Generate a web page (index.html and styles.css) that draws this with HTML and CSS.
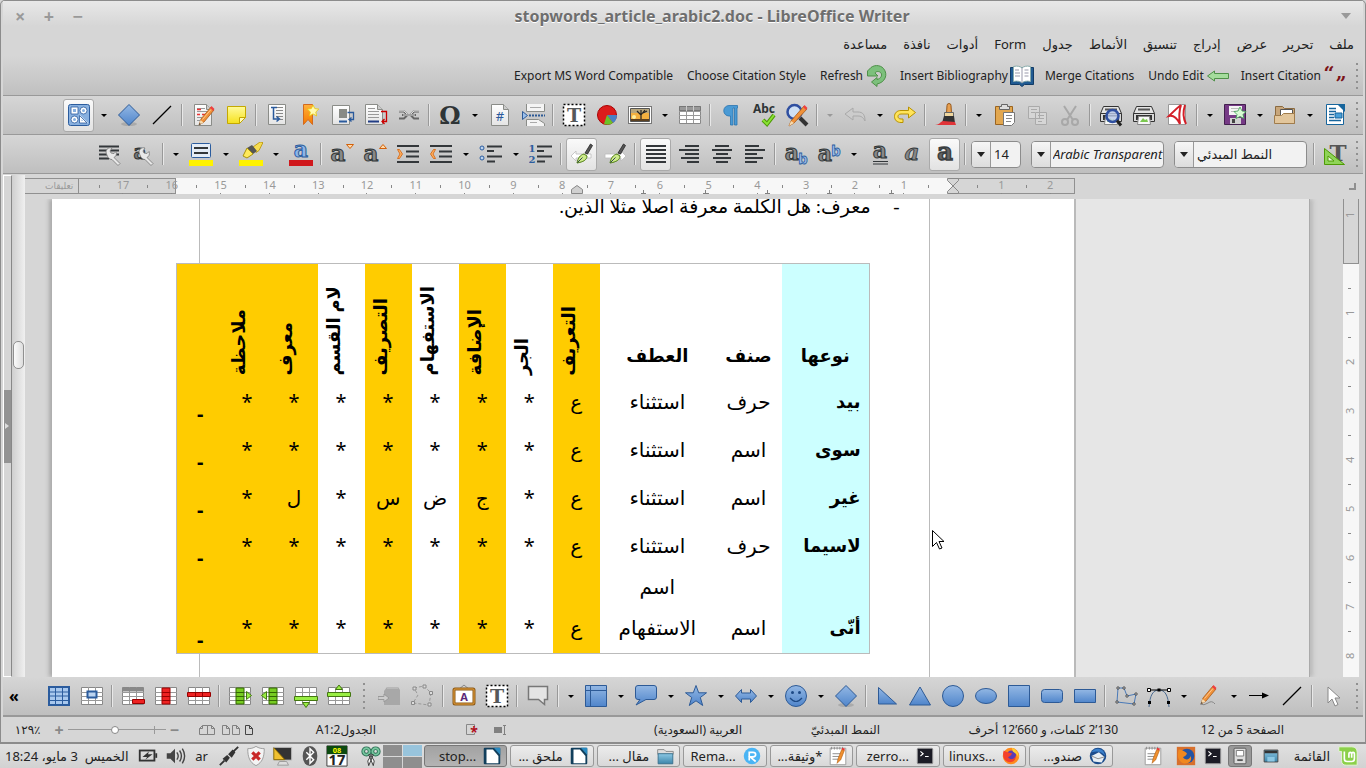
FILE: index.html
```html
<!DOCTYPE html>
<html lang="ar" dir="rtl">
<head>
<meta charset="utf-8">
<title>stopwords_article_arabic2.doc - LibreOffice Writer</title>
<link rel="stylesheet" href="styles.css">
</head>
<body>
<svg class="paints" aria-hidden="true">
<linearGradient id="blue" x1="0" y1="0" x2="0" y2="1"><stop offset="0" stop-color="#94b8e4"/><stop offset="1" stop-color="#4f85cb"/></linearGradient>
<linearGradient id="paper" x1="0" y1="0" x2="0" y2="1"><stop offset="0" stop-color="#fff"/><stop offset="1" stop-color="#e4e4e4"/></linearGradient>
<linearGradient id="yel" x1="0" y1="0" x2="0" y2="1"><stop offset="0" stop-color="#fffa9a"/><stop offset="1" stop-color="#f5e11c"/></linearGradient>
<linearGradient id="ora" x1="0" y1="0" x2="0" y2="1"><stop offset="0" stop-color="#ffb13b"/><stop offset="1" stop-color="#f57900"/></linearGradient>
<linearGradient id="sky" x1="0" y1="0" x2="0" y2="1"><stop offset="0" stop-color="#8cc8e4"/><stop offset="1" stop-color="#3d85aa"/></linearGradient>
</svg>
<svg class="sprite" aria-hidden="true">
<defs>
<g id="page"><path d="M3.500 1.500h12l5 5v16h-17z" fill="url(#paper)" stroke="#8a8c88"/><path d="M15.500 1.500v5h5" fill="#ccc" stroke="#8a8c88"/></g>
<g id="pencil"><path d="M8 22l2-6L20 4l3 3-10 12z" fill="#f0923a" stroke="#a85a1a" stroke-width=".8"/><path d="M19 5l3 3 1.500-2-3-3z" fill="#ef4040"/><path d="M8 22l1.500-5 3 2.500z" fill="#f6dcb0"/><path d="M8 22l.6-2 1.200 1z" fill="#222"/><path d="M11.500 16.500L20 6.500" stroke="#ffc890"/></g>
<g id="grid"><path d="M1.500 3.500h21v17h-21z" fill="#fff" stroke="#888"/><path d="M1 8.500h22M1 12.500h22M1 16.500h22M8.500 3v17M15.500 3v17" stroke="#999"/></g>
<g id="nib"><path d="M15 11L20.500 2l2 1.500L17.500 12z" fill="#555" stroke="#222" stroke-width=".8"/><path d="M7 21c1-5 3-8 7-9l3 2c0 4-4 6-10 7z" fill="#cdeb8a" stroke="#4e7d12"/><path d="M7.500 20.500l5-5" stroke="#345"/></g>
<g id="wrench"><path d="M8 10c0-3 3-5 6-4l-2 3 1 2 3 .5 2-2c1 3 0 5-2 6l6 6-2 2-6-6c-3 0-5-3-6-7.500z" fill="#e8e8e8" stroke="#777" stroke-width=".8"/></g>
</defs>
<symbol id="i-shapes" viewBox="0 0 24 24"><rect x="1.500" y="1.500" width="21" height="21" rx="2" fill="#88b0df" stroke="#2b5c9e"/><g fill="none" stroke="#fff" stroke-width="2"><path d="M5 5h5v5H5zM13.500 14v5h5z"/><circle cx="16.500" cy="7.500" r="2.500"/><circle cx="7.500" cy="16.500" r="2.500"/></g><g fill="none" stroke="#2b5c9e" stroke-width=".8"><path d="M4 4h7v7H4zM12.500 12.500v7.500H20z"/><circle cx="16.500" cy="7.500" r="3.500"/><circle cx="7.500" cy="16.500" r="3.500"/></g></symbol>
<symbol id="i-diamond" viewBox="0 0 24 24"><ellipse cx="12" cy="21" rx="8" ry="2" fill="#0002"/><path d="M12 1.500L22.500 12 12 22.500 1.500 12z" fill="url(#blue)" stroke="#2d5a96"/></symbol>
<symbol id="i-line" viewBox="0 0 24 24"><path d="M3 21L21 3" stroke="#000" stroke-width="1.200"/></symbol>
<symbol id="i-edit" viewBox="0 0 24 24"><use href="#page"/><path d="M6 5.500h8M6 8.500h11M6 14.500h5M6 17.500h5" stroke="#999"/><path d="M6 6.500h4M11 11.500h4M6 11.500h3" stroke="#e33" stroke-width="1.500"/><use href="#pencil"/></symbol>
<symbol id="i-note" viewBox="0 0 24 24"><path d="M3.500 3.500h18v11l-6 6h-12z" fill="url(#yel)" stroke="#c4a800"/><path d="M15.500 20.500v-6h6z" fill="#fffbb8" stroke="#c4a800"/></symbol>
<symbol id="i-index" viewBox="0 0 24 24"><path d="M3.500 1.500h17v20h-17z" fill="url(#paper)" stroke="#8a8c88"/><path d="M6 4.500h12M11 7.500h7M11 10.500h7M11 13.500h7M15 16.500h3" stroke="#888"/><path d="M6 4.500h6M8.500 5v11H14M11.500 13.500l3 2.500-3 2.500" fill="none" stroke="#2a5a9c" stroke-width="1.500"/></symbol>
<symbol id="i-bookmark" viewBox="0 0 24 24"><path d="M5.500 1.500h9v20l-4.500-5-4.500 5z" fill="url(#ora)" stroke="#d2691e"/><path d="M15 2l1.800 3.600 4 .5-3 2.800.8 4-3.600-2-3.500 2 .8-4-3-2.800 4-.5z" fill="#fff9b0" stroke="#e8c800" stroke-width=".8"/></symbol>
<symbol id="i-footnote" viewBox="0 0 24 24"><path d="M1.500 2.500h17v19h-17z" fill="url(#paper)" stroke="#8a8c88"/><path d="M8 6h8v9H8z" fill="#888a85"/><path d="M8 18.500h8" stroke="#2a5a9c" stroke-width="2"/><path d="M16.500 9.500h6v7h-4M20.500 14.500l-2.500 2 2.500 2" fill="none" stroke="#2a5a9c" stroke-width="1.300"/></symbol>
<symbol id="i-endnote" viewBox="0 0 24 24"><path d="M1.500 1.500h12l5 5v15h-17z" fill="url(#paper)" stroke="#8a8c88"/><path d="M13.500 1.500v5h5" fill="#ccc" stroke="#8a8c88"/><path d="M4 5.500h7M4 8.500h11M4 11.500h11M4 14.500h11" stroke="#999"/><path d="M4 18.500h11" stroke="#203c84" stroke-width="2"/><path d="M17 8.500h5.500v10h-4M20.500 16l-2.500 2.500 2.500 2.500" fill="none" stroke="#c00" stroke-width="1.300"/></symbol>
<symbol id="i-link" viewBox="0 0 24 24"><path d="M2 8.500h5l3 3M2 15.500h5l3-3M22 8.500h-5l-3 3M22 15.500h-5l-3-3M5 12h14" fill="none" stroke="#666" stroke-width="2"/><path d="M2 8h5l3 3M22 8h-5l-3 3M6 12h12" fill="none" stroke="#ddd"/></symbol>
<symbol id="i-omega" viewBox="0 0 24 24"><text x="12" y="21" class="gs" font-size="24" text-anchor="middle" fill="#2e3436">Ω</text></symbol>
<symbol id="i-field" viewBox="0 0 24 24"><use href="#page"/><text x="12" y="18" font-size="13" text-anchor="middle" fill="#2a5a9c">#</text></symbol>
<symbol id="i-pagebreak" viewBox="0 0 24 24"><path d="M5.500 1v7.500h18V1M5.500 23v-6.500h12l6 4V23" fill="#f4f4f4" stroke="#8a8c88"/><path d="M9 4.500h11M9 19.500h7" stroke="#aaa"/><path d="M1.500 8.500v8l5-4z" fill="#9cc0ec" stroke="#2d5a96"/><path d="M8 12.500h16" stroke="#2d5a96" stroke-width="2" stroke-dasharray="2 1"/></symbol>
<symbol id="i-textbox" viewBox="0 0 24 24"><rect x="1.500" y="1.500" width="21" height="21" fill="#fff" stroke="#000" stroke-width="1.500" stroke-dasharray="2 2"/><text x="12" y="19" class="gs" font-size="19" text-anchor="middle" fill="#55585a">T</text></symbol>
<symbol id="i-chart" viewBox="0 0 24 24"><circle cx="12" cy="12" r="9.500" fill="#dc1c1c" stroke="#a00"/><path d="M12 12h10a10 10 0 0 1-4 8z" fill="#4a80c4"/><path d="M12 12l6 8a10 10 0 0 1-9 1z" fill="#6cc228"/></symbol>
<symbol id="i-image" viewBox="0 0 24 24"><rect x=".5" y="3.500" width="23" height="17" fill="#fff" stroke="#777"/><path d="M2.500 5.500h19v13h-19z" fill="#f3b040" stroke="#555"/><path d="M3 6h18v4H3z" fill="#b9a77c"/><circle cx="6" cy="14" r="2" fill="#fff0a0"/><path d="M13 18v-6L9 8M13 12l4-5M13 11V7M15 10l4-2" stroke="#222" stroke-width="1.200" fill="none"/><path d="M3 16h18v2H3z" fill="#5a4020"/></symbol>
<symbol id="i-table" viewBox="0 0 24 24"><use href="#grid"/><path d="M1.500 3.500h21v4h-21z" fill="#999" stroke="#777"/><path d="M8.500 3v5M15.500 3v5" stroke="#ccc"/></symbol>
<symbol id="i-pilcrow" viewBox="0 0 24 24"><path d="M18.500 2.500H10a5 5 0 0 0 0 10.500h1.500v9h2.500v-17h1.500v17H18v-17h.5z" fill="#4a9ad4" stroke="#2a74b0" stroke-width=".8"/></symbol>
<symbol id="i-spell" viewBox="0 0 24 24"><text x="12" y="10" class="gb" font-size="12" text-anchor="middle" fill="#2e3436">Abc</text><path d="M11 17l4 4 7-9" fill="none" stroke="#4e9a06" stroke-width="4"/><path d="M11 17l4 4 7-9" fill="none" stroke="#8ae234" stroke-width="2"/></symbol>
<symbol id="i-find" viewBox="0 0 24 24"><circle cx="9.500" cy="9" r="7" fill="#cfe0f4" stroke="#2f4fa0" stroke-width="2.500"/><path d="M15 15l7 7" stroke="#333" stroke-width="4"/><path d="M4 23l2-5L19 3l3 3L9 20z" fill="#f0923a" stroke="#a85a1a" stroke-width=".8"/><path d="M18 4l3 3 1.500-2-3-3z" fill="#ef4040"/><path d="M4 23l2-5 3 2z" fill="#f6dcb0"/></symbol>
<symbol id="i-undo" viewBox="0 0 24 24"><path d="M2 11l8-6v4h5c5 0 7 3 7 9-2-4-4-5-7-5h-5v4z" fill="#ccc" stroke="#a9a9a9"/></symbol>
<symbol id="i-redo" viewBox="0 0 24 24"><path d="M22.500 9.500L15.500 4v3.500H8c-4 0-6.500 2.500-6.500 6 0 3.500 2.500 6 6.500 6h2v-3.500H8c-4 0-4-5 0-5h7.500V15z" fill="#ffe45a" stroke="#b89200"/></symbol>
<symbol id="i-brush" viewBox="0 0 24 24"><path d="M13 2.500a2 2 0 0 1 4 0l.5 8h-5z" fill="#e8a050" stroke="#96581c"/><path d="M10.500 9.500h9v4h-9z" fill="#f0d8a0" stroke="#666"/><path d="M10 13h10l1 7H8z" fill="#333"/><path d="M1 22c4 0 5-3 8-4l12 1 1 3z" fill="#e03438"/></symbol>
<symbol id="i-paste" viewBox="0 0 24 24"><path d="M3.500 3.500h17v18h-17z" fill="#e2a74f" stroke="#9a6420"/><path d="M9.500 1.500h6v2h2v3h-10v-3h2z" fill="#ddd" stroke="#666"/><path d="M11.500 9.500h11v10l-3 3h-8z" fill="#fff" stroke="#777"/><path d="M14 12.500h6M14 15.500h6M14 18.500h5" stroke="#888"/></symbol>
<symbol id="i-copy" viewBox="0 0 24 24"><g fill="#d6d6d6" stroke="#aaa"><path d="M3.500 3.500h11v12h-11zM10.500 9.500h11v12h-11z"/><path d="M6 6.500h6M6 9.500h4M13 12.500h6M13 15.500h6M13 18.500h4"/></g></symbol>
<symbol id="i-cut" viewBox="0 0 24 24"><path d="M6 3l9 14M18 3L9 17" stroke="#a8a8a8" stroke-width="2"/><g fill="none" stroke="#a8a8a8" stroke-width="2"><circle cx="7" cy="19" r="3"/><circle cx="17" cy="19" r="3"/></g></symbol>
<symbol id="i-printer" viewBox="0 0 24 24"><path d="M4.500 3.500h15l3 7H1.500z" fill="#e4e4e4" stroke="#333"/><path d="M6 6.500h12" stroke="#555" stroke-width="2"/><path d="M1.500 10.500h21v8h-21z" fill="#d8d8d8" stroke="#333"/><path d="M4 12h16v5H4z" fill="#333"/><path d="M6.500 13.500h11l1 8h-13z" fill="#f8f8f8" stroke="#888"/><path d="M8 19l3-4 2 2 2-1 1 3z" fill="#7cc850"/></symbol>
<symbol id="i-preview" viewBox="0 0 24 24"><use href="#i-printer"/><circle cx="13.500" cy="13" r="6" fill="#b8c8e8cc" stroke="#2f4fa0" stroke-width="2.500"/><path d="M18 17.500l4 5" stroke="#222" stroke-width="3"/></symbol>
<symbol id="i-pdf" viewBox="0 0 24 24"><path d="M3.500 1.500h17v20h-17z" fill="#fff" stroke="#999"/><path d="M16 2C13 4 7 10 4 13c4-1 8 2 11 8M16 2c-2 6-2 13-1 19M20 2c-2 6-2 13 1 19" fill="none" stroke="#d41f28" stroke-width="2"/></symbol>
<symbol id="i-save" viewBox="0 0 24 24"><path d="M1.500 1.500h21v20h-21z" fill="#763a86" stroke="#43204e"/><path d="M6 3h13v9H6z" fill="#f4f4f4"/><path d="M8 5.500h8M8 8.500h5" stroke="#bbb"/><path d="M7 15h11v6H7z" fill="#d0d0d0"/><path d="M9 16h3v4H9z" fill="#444"/><path d="M17 4l2 4 4 .5-3 3 1 4-4-2-4 2 1-4-3-3 4-.5z" fill="#d9fbd4" stroke="#3a9a50" stroke-width=".8"/></symbol>
<symbol id="i-folder" viewBox="0 0 24 24"><path d="M2.500 20.500v-17h7l2 2h10v15z" fill="#c8a67a" stroke="#8a6a40"/><path d="M7.500 6.500h12v8h-12z" fill="#fff" stroke="#555"/><path d="M1.500 12.500h7l2-2h11v10h-20z" fill="#e2c69c" stroke="#a07c4c"/></symbol>
<symbol id="i-writer" viewBox="0 0 24 24"><path d="M3.500 1.500h17v20h-17z" fill="#fff" stroke="#17659c"/><path d="M14 1h8v8z" fill="#17659c"/><path d="M6 5.500h7M6 8.500h7M6 17.500h12" stroke="#17659c" stroke-width="1.500"/><path d="M6 11.500h5M6 14.500h5" stroke="#17659c" stroke-width="1.500"/><path d="M12 10h7v5h-7z" fill="#4aa0d8" stroke="#17659c"/></symbol>
<symbol id="i-para" viewBox="0 0 24 24"><path d="M1 4.500h20M1 8.500h20M1 12.500h20M1 16.500h10" stroke="#33373a" stroke-width="2"/><use href="#wrench"/></symbol>
<symbol id="i-char" viewBox="0 0 24 24"><text x="9" y="17" class="gs" font-size="20" text-anchor="middle" fill="#777" stroke="#2e3436">a</text><use href="#wrench"/></symbol>
<symbol id="i-bgcolor" viewBox="0 0 24 24"><rect x="2.500" y="1.500" width="19" height="14" rx="1" fill="#e4ecf6" stroke="#2b5c9e"/><path d="M5 6h14M5 11h14" stroke="#33373a" stroke-width="2"/><path d="M0 18h24v6H0z" fill="#fff200"/></symbol>
<symbol id="i-highlight" viewBox="0 0 24 24"><path d="M14 5l7-5 3 .5-4 8-3 2z" fill="#f6dc50" stroke="#b89200" stroke-width=".8"/><path d="M8 6l5-3 5 6-4 3z" fill="#555"/><path d="M4 14l4-8 6 6-6 4z" fill="#ffe95a" stroke="#a8920c"/><path d="M0 18h24v6H0z" fill="#fff200"/></symbol>
<symbol id="i-fontcolor" viewBox="0 0 24 24"><text x="12" y="15" class="gs" font-size="22" text-anchor="middle" fill="#8cb4e8" stroke="#2b5c9e">a</text><path d="M0 18h24v6H0z" fill="#d0181c"/></symbol>
<symbol id="i-grow" viewBox="0 0 24 24"><text x="8" y="19" class="gs" font-size="23" text-anchor="middle" fill="#888" stroke="#2e3436">a</text><path d="M16.500 6.500l3.500-4 3.500 4z" fill="#ffd9a8" stroke="#d2600a"/></symbol>
<symbol id="i-shrink" viewBox="0 0 24 24"><text x="8" y="19" class="gs" font-size="23" text-anchor="middle" fill="#888" stroke="#2e3436">a</text><path d="M16.500 2.500l3.500 4 3.500-4z" fill="#ffd9a8" stroke="#d2600a"/></symbol>
<symbol id="i-indent" viewBox="0 0 24 24"><path d="M1 4h22M10 9.500h13M10 14.500h13M1 20h22" stroke="#33373a" stroke-width="2"/><path d="M1.500 7.500h2l3 4.500-3 4.500h-2l2.500-4.500z" fill="#ffb060" stroke="#d2600a" stroke-width=".8"/></symbol>
<symbol id="i-outdent" viewBox="0 0 24 24"><path d="M1 4h22M10 9.500h13M10 14.500h13M1 20h22" stroke="#33373a" stroke-width="2"/><path d="M6.500 7.500h-2l-3 4.500 3 4.500h2L4 12z" fill="#ffb060" stroke="#d2600a" stroke-width=".8"/></symbol>
<symbol id="i-bullets" viewBox="0 0 24 24"><path d="M8 4.500h15M8 9h7M8 14.500h15M8 19.500h8" stroke="#33373a" stroke-width="2"/><g fill="#bcd4f0" stroke="#2b5c9e"><circle cx="3" cy="6" r="2"/><circle cx="3" cy="16" r="2"/></g></symbol>
<symbol id="i-numbers" viewBox="0 0 24 24"><path d="M8 4.500h15M8 9h7M8 14.500h15M8 19.500h8" stroke="#33373a" stroke-width="2"/><text x="3" y="10" class="gs" font-size="10" text-anchor="middle" fill="#2b5c9e">1</text><text x="3" y="21" class="gs" font-size="10" text-anchor="middle" fill="#2b5c9e">2</text></symbol>
<symbol id="i-rtl" viewBox="0 0 24 24"><path d="M1 14l5-5v3h15v4H6v3z" fill="#fff" stroke="#bbb" stroke-width=".8"/><use href="#nib"/></symbol>
<symbol id="i-ltr" viewBox="0 0 24 24"><path d="M23 14l-5-5v3H2v4h16v3z" fill="#fff" stroke="#bbb" stroke-width=".8"/><use href="#nib"/></symbol>
<symbol id="i-justify" viewBox="0 0 24 24"><path d="M2 4h20M2 8h20M2 12h20M2 16h20M2 20h20" stroke="#33373a" stroke-width="2"/></symbol>
<symbol id="i-right" viewBox="0 0 24 24"><path d="M8 4h14M2 8h20M8 12h14M4 16h18M10 20h12" stroke="#33373a" stroke-width="2"/></symbol>
<symbol id="i-center" viewBox="0 0 24 24"><path d="M5 4h14M2 8h20M6 12h12M3 16h18M6 20h12" stroke="#33373a" stroke-width="2"/></symbol>
<symbol id="i-left" viewBox="0 0 24 24"><path d="M2 4h14M2 8h20M2 12h12M2 16h18M2 20h12" stroke="#33373a" stroke-width="2"/></symbol>
<symbol id="i-sub" viewBox="0 0 24 24"><text x="8" y="18" class="gs" font-size="22" text-anchor="middle" fill="#888" stroke="#2e3436">a</text><text x="19" y="22" class="gb" font-size="15" text-anchor="middle" fill="#9cc0ec" stroke="#2b5c9e" stroke-width=".8">b</text></symbol>
<symbol id="i-sup" viewBox="0 0 24 24"><text x="8" y="19" class="gs" font-size="22" text-anchor="middle" fill="#888" stroke="#2e3436">a</text><text x="19" y="14" class="gb" font-size="15" text-anchor="middle" fill="#9cc0ec" stroke="#2b5c9e" stroke-width=".8">b</text></symbol>
<symbol id="i-under" viewBox="0 0 24 24"><text x="13" y="16" class="gs" font-size="22" text-anchor="middle" fill="#888" stroke="#2e3436">a</text><path d="M6 19.500h15M6 22h15" stroke="#33373a"/></symbol>
<symbol id="i-italic" viewBox="0 0 24 24"><text x="12" y="18" class="gs" font-style="italic" font-size="23" text-anchor="middle" fill="#888" stroke="#2e3436" stroke-width=".8">a</text></symbol>
<symbol id="i-bold" viewBox="0 0 24 24"><text x="12" y="18" class="gs" font-size="24" text-anchor="middle" fill="#666" stroke="#3a3f42" stroke-width="1.500">a</text></symbol>
<symbol id="i-styles" viewBox="0 0 24 24"><text x="15" y="19" class="gs" font-size="23" text-anchor="middle" fill="#555">T</text><path d="M1.500 6.500v16h20z" fill="#8fd457" stroke="#4e9a06"/><path d="M5 14v5h6z" fill="#e8f8d8" stroke="#4e9a06"/></symbol>
<symbol id="i-quote" viewBox="0 0 24 24"><text x="6" y="16" class="gs" font-size="19" text-anchor="middle" fill="#7a1218">“</text><text x="18" y="26" class="gs" font-size="19" text-anchor="middle" fill="#7a1218">”</text></symbol>
<symbol id="i-back" viewBox="0 0 24 24"><path d="M1.500 12l7-5v2.500h14v5h-14V17z" fill="#a4dc9c" stroke="#4e9048"/></symbol>
<symbol id="i-book" viewBox="0 0 24 24"><path d="M.5 3.500h23v17h-9l-2.500 2-2.500-2h-9z" fill="#205a92" stroke="#123c66"/><path d="M3.500 2.500c4-1 7 0 8.500 1.500 1.500-1.500 4.500-2.500 8.500-1.500v15c-4-1-7 0-8.500 1.500-1.500-1.500-4.500-2.500-8.500-1.500z" fill="#fff" stroke="#8aa"/><path d="M12 4v15M5 6h4M5 9h5M5 12h5M14.500 6h4M14.500 9h4M14.500 12h4" stroke="#99a"/></symbol>
<symbol id="i-refresh" viewBox="0 0 24 24"><path d="M4.500 5C8 .5 15 .5 18.500 4.500c5 6 1.500 14-6.500 15.500v2.500L6.500 18l5.500-4.500v2c4-1 5.500-4 4-6.500-1.500-2-5-2-6 0l3 3H2.500V7z" fill="#7cc07c" stroke="#4e9048"/></symbol>
<symbol id="i-tabsel" viewBox="0 0 24 24"><path d="M2 3h20v18H2z" fill="#a8c8ee" stroke="#2b5c9e" stroke-width="2"/><path d="M1 8h22M1 12h22M1 16.500h22M8.500 3v17M15.500 3v17" stroke="#2b5c9e"/></symbol>
<symbol id="i-cellsel" viewBox="0 0 24 24"><use href="#grid"/><path d="M7.500 7.500h9v6h-9z" fill="#bcd4f0" stroke="#2b5c9e" stroke-width="2"/></symbol>
<symbol id="i-deltab" viewBox="0 0 24 24"><use href="#grid"/><path d="M1.500 3.500h21v4h-21z" fill="#888"/><path d="M11.500 15.500h12v4h-12z" fill="#e22" stroke="#900"/></symbol>
<symbol id="i-delcol" viewBox="0 0 24 24"><use href="#grid"/><path d="M8 4h8v16H8z" fill="#e22" stroke="#900"/><path d="M8 8.500h8M8 12.500h8M8 16.500h8" stroke="#900"/></symbol>
<symbol id="i-delrow" viewBox="0 0 24 24"><use href="#grid"/><path d="M.5 8.500h23v4H.5z" fill="#e22" stroke="#900"/><path d="M8.500 8v4M15.500 8v4" stroke="#900"/></symbol>
<symbol id="i-colafter" viewBox="0 0 24 24"><use href="#grid"/><path d="M8 4h8v16H8z" fill="#7c2" stroke="#360"/><path d="M8 8.500h8M8 12.500h8M8 16.500h8" stroke="#360"/><path d="M18.500 7.500v8l5-4z" fill="#9e4" stroke="#471"/></symbol>
<symbol id="i-colbefore" viewBox="0 0 24 24"><use href="#grid"/><path d="M8 4h8v16H8z" fill="#7c2" stroke="#360"/><path d="M8 8.500h8M8 12.500h8M8 16.500h8" stroke="#360"/><path d="M5.500 7.500v8l-5-4z" fill="#9e4" stroke="#471"/></symbol>
<symbol id="i-rowbelow" viewBox="0 0 24 24"><use href="#grid"/><path d="M.5 12.500h23v4H.5z" fill="#9e4" stroke="#471"/><path d="M8.500 18.500h7l-3.500 5z" fill="#9e4" stroke="#471"/></symbol>
<symbol id="i-rowabove" viewBox="0 0 24 24"><use href="#grid"/><path d="M.5 8.500h23v4H.5z" fill="#9e4" stroke="#471"/><path d="M8.500 5.500h7L12 1z" fill="#9e4" stroke="#471"/></symbol>
<symbol id="i-glue" viewBox="0 0 24 24"><path d="M6 7l3-4h11l2 3v15H6z" fill="#a8a8a8"/><path d="M9 4h11" stroke="#c8c8c8"/><path d="M0 12.500h6V10l5 4-5 4v-2.500H0z" fill="#ccc" stroke="#999"/></symbol>
<symbol id="i-points" viewBox="0 0 24 24"><path d="M3 4l10-2 7 7-2 12-16-2 5-8z" fill="none" stroke="#999" stroke-dasharray="3 2"/><g fill="#ddd" stroke="#888"><path d="M2 3h3v3H2zM12 1h3v3h-3zM18.500 7.500h3v3h-3zM17 19h3v3h-3zM.500 17.500h3v3h-3z"/></g></symbol>
<symbol id="i-fontwork" viewBox="0 0 24 24"><path d="M6 6l6-5 6 5" fill="none" stroke="#888"/><rect x="2" y="5" width="20" height="15" rx="1" fill="#fff" stroke="#8c5a18" stroke-width="3"/><rect x="2" y="5" width="20" height="15" rx="1" fill="none" stroke="#eaa23c"/><text x="12" y="17" class="gb" font-size="11" text-anchor="middle" fill="#5c2a78">A</text></symbol>
<symbol id="i-comment" viewBox="0 0 24 24"><path d="M2.500 2.500h19v13h-3v5l-6-5h-10z" fill="#e4e4e4" stroke="#777" stroke-width="1.500"/></symbol>
<symbol id="i-flow" viewBox="0 0 24 24"><path d="M1.500 1.500h21v21h-21z" fill="url(#blue)" stroke="#2d5a96"/><path d="M6.500 1.500v21M1.500 6.500h21" stroke="#2d5a96"/></symbol>
<symbol id="i-callout" viewBox="0 0 24 24"><path d="M4 1.500h16q2.500 0 2.500 2.500v9q0 2.500-2.500 2.500H12L2 21l4-5.500H4q-2.500 0-2.500-2.500V4Q1.500 1.500 4 1.500z" fill="url(#blue)" stroke="#2d5a96"/></symbol>
<symbol id="i-star" viewBox="0 0 24 24"><path d="M12 1.500l2.700 7.300h7.800l-6.200 4.700 2.400 8L12 16.800l-6.700 4.700 2.400-8L1.500 8.800h7.800z" fill="url(#blue)" stroke="#2d5a96"/></symbol>
<symbol id="i-arrows" viewBox="0 0 24 24"><path d="M1.500 12l6-6.500V9h9V5.500l6 6.500-6 6.500V15h-9v3.500z" fill="url(#blue)" stroke="#2d5a96"/></symbol>
<symbol id="i-smiley" viewBox="0 0 24 24"><circle cx="12" cy="12" r="10.500" fill="url(#blue)" stroke="#2d5a96"/><path d="M6 14q6 7 12 0" fill="none" stroke="#1d4a86" stroke-width="1.200"/><circle cx="8.500" cy="8.500" r="1.500" fill="#1d4a86"/><circle cx="15.500" cy="8.500" r="1.500" fill="#1d4a86"/></symbol>
<symbol id="i-rtri" viewBox="0 0 24 24"><path d="M3.500 3.500v16.500h18z" fill="url(#blue)" stroke="#2d5a96"/></symbol>
<symbol id="i-tri" viewBox="0 0 24 24"><path d="M12 3l10.500 18h-21z" fill="url(#blue)" stroke="#2d5a96"/></symbol>
<symbol id="i-circle" viewBox="0 0 24 24"><circle cx="12" cy="12" r="10.500" fill="url(#blue)" stroke="#2d5a96"/></symbol>
<symbol id="i-ellipse" viewBox="0 0 24 24"><ellipse cx="12" cy="12" rx="10.500" ry="7.500" fill="url(#blue)" stroke="#2d5a96"/></symbol>
<symbol id="i-square" viewBox="0 0 24 24"><path d="M1.500 1.500h21v21h-21z" fill="url(#blue)" stroke="#2d5a96"/></symbol>
<symbol id="i-round" viewBox="0 0 24 24"><rect x="1.500" y="5.500" width="21" height="13" rx="3" fill="url(#blue)" stroke="#2d5a96"/></symbol>
<symbol id="i-rect" viewBox="0 0 24 24"><path d="M1.500 5.500h21v13h-21z" fill="url(#blue)" stroke="#2d5a96"/></symbol>
<symbol id="i-poly" viewBox="0 0 24 24"><path d="M4 4h6l3 8 9-2-2 10-17-2z" fill="none" stroke="#4a7ab8"/><g fill="#fff" stroke="#333" stroke-width=".8"><path d="M3 3h2v2H3zM9 3h2v2H9zM12 11h2v2h-2zM21 9h2v2h-2zM19 19h2v2h-2zM2 17h2v2H2z"/></g></symbol>
<symbol id="i-curve" viewBox="0 0 24 24"><path d="M2 23C3 11 6 6 12 6s9 5 10 17" fill="none" stroke="#4a6a90"/><path d="M2 6h20" stroke="#000"/><path d="M10.500 4.500h3v3h-3zM1 17h3v3H1zM20 17h3v3h-3z"/><path d="M0.500 4.500h3v3h-3zM20.500 4.500h3v3h-3z" fill="#fff" stroke="#000"/></symbol>
<symbol id="i-pencil" viewBox="0 0 24 24"><use href="#pencil" transform="translate(-4 -2)"/><path d="M3 20q4 2 8-1t7 1" fill="none" stroke="#888"/></symbol>
<symbol id="i-arrow" viewBox="0 0 24 24"><path d="M2 11.500h15" stroke="#000"/><path d="M15 8.500v6l7-3z"/></symbol>
<symbol id="i-cursor" viewBox="0 0 24 24"><path d="M7 3v16l4-4 3 7 3-1.500-3-6.500h5z" fill="#fff" stroke="#888"/></symbol>
<symbol id="i-lo" viewBox="0 0 24 24"><rect x="3" y="3" width="18" height="18" rx="1" fill="#123f5c"/><path d="M6 5h7l6 7v8H6z" fill="#fff"/><path d="M14 3h7v8z" fill="#2a8ac0"/></symbol>
<symbol id="i-files" viewBox="0 0 24 24"><path d="M4 5h7l2 2h8v3H4z" fill="#ddd" stroke="#888"/><path d="M4.500 9.500h16v11h-16z" fill="url(#sky)" stroke="#38708c"/></symbol>
<symbol id="i-rema" viewBox="0 0 24 24"><circle cx="12" cy="12" r="9" fill="#4ab4f4"/><path d="M9 17V8h4q3 0 3 2.500T12 13h-2l6 5" fill="none" stroke="#fff" stroke-width="1.800"/></symbol>
<symbol id="i-text" viewBox="0 0 24 24"><path d="M3.500 3.500h17v18h-17z" fill="#fff" stroke="#999"/><path d="M5 2v3M8 2v3M11 2v3M14 2v3M17 2v3M6 9.500h9M6 12.500h9M6 15.500h9" stroke="#888"/><path d="M11 20l1-5 4-10 3 1-4 10z" fill="#f09030" stroke="#a50" stroke-width=".6"/><path d="M16 5l3 1 .5-2-3-1z" fill="#e33"/></symbol>
<symbol id="i-term" viewBox="0 0 24 24"><rect x="3.500" y="3.500" width="17" height="17" rx="1" fill="#1c1c26" stroke="#aaa"/><path d="M7 7l3 2.500L7 12M12 12.500h4" fill="none" stroke="#fff" stroke-width="1.200"/></symbol>
<symbol id="i-fox" viewBox="0 0 24 24"><circle cx="12" cy="12" r="9" fill="#ff8a1c"/><circle cx="12.500" cy="11" r="5" fill="#5a3cb4"/><path d="M4 6c3 2 5 2 9 3-1 4-4 3-4 5 3 3 7 1 8-2 1 6-6 9-11 5-3-3-3-7-2-11z" fill="#f4402c"/><path d="M13 3c5 2 8 6 7 11-1-4-3-5-6-7z" fill="#ffcf30"/></symbol>
<symbol id="i-bird" viewBox="0 0 24 24"><circle cx="12" cy="12" r="9" fill="#1c4c8c"/><path d="M5 12l8-4 6 5-3 6-9-1z" fill="#e8eef4"/><path d="M5 12l7 3 7-2" fill="none" stroke="#888"/><path d="M5 8c3-5 10-5 13-1l2 5c-4-5-9-6-15-4z" fill="#3a80cc"/></symbol>
<symbol id="i-fox2" viewBox="0 0 24 24"><rect x="2" y="2" width="20" height="20" fill="#d8702c"/><circle cx="13" cy="12" r="8" fill="#2454a4"/><path d="M4 5c4 0 6 2 9 4-1 4-4 3-4 5 3 3 7 2 8-2 3 7-6 11-11 6-4-4-3-9-2-13z" fill="#f08820"/></symbol>
<symbol id="i-cab" viewBox="0 0 24 24"><rect x="5.500" y="3.500" width="13" height="17" rx="1" fill="#ddd" stroke="#555"/><path d="M8 6h8v6H8z" fill="#fff" stroke="#777"/><path d="M9 16.500h6" stroke="#555" stroke-width="2"/></symbol>
<symbol id="i-desk" viewBox="0 0 24 24"><path d="M4.500 5.500h15v13h-15z" fill="url(#sky)" stroke="#444"/><path d="M5 6h14v3H5z" fill="#333"/><path d="M8 13h8v5H8z" fill="#8cc8e4"/></symbol>
<symbol id="i-mint" viewBox="0 0 24 24"><path d="M2 2h14q6 0 6 6v14H10q-5 0-5-5V7H2z" fill="#8cd04a" stroke="#e8f4dc"/><path d="M8 7v8q0 3 3 3h5q3 0 3-3V10q0-2-1.500-2T16 10v4M16 10q0-2-1.500-2T13 10v4" fill="none" stroke="#fff" stroke-width="1.800"/></symbol>
<symbol id="i-scis" viewBox="0 0 24 24"><g fill="none" stroke="#2c6e54" stroke-width="4"><circle cx="7" cy="7" r="3.500"/><circle cx="17" cy="7" r="3.500"/></g><g fill="none" stroke="#78c8a0" stroke-width="2"><circle cx="7" cy="7" r="3.500"/><circle cx="17" cy="7" r="3.500"/></g><path d="M9.500 10.500l5 12 1-5-4-7zM14.500 10.500l-5 12-1-5 4-7z" fill="#fff" stroke="#333"/></symbol>
<symbol id="i-cal" viewBox="0 0 24 24"><path d="M1 1h22v22H1z" fill="#fff" stroke="#333"/><path d="M1 1h22v9H1z" fill="#0c4a10"/><text x="12" y="9" class="gb" font-size="8" text-anchor="middle" fill="#ff0">08</text><text x="12" y="22" class="gb" font-size="16" text-anchor="middle" fill="#222">17</text></symbol>
<symbol id="i-bt" viewBox="0 0 24 24"><ellipse cx="12" cy="12" rx="8" ry="11" fill="#555"/><path d="M8 8l8 8-4 4V4l4 4-8 8" fill="none" stroke="#fff" stroke-width="1.500"/></symbol>
<symbol id="i-mon" viewBox="0 0 24 24"><path d="M1.500 2.500h20v14h-20z" fill="#333" stroke="#ccc"/><path d="M2 3v13h12z" fill="#f0c030" stroke="#8a6a00"/><path d="M6 22h12l-2-4H8z" fill="#ddd" stroke="#999"/></symbol>
<symbol id="i-shield" viewBox="0 0 24 24"><path d="M12 1.500c3 2 6 2.500 9 2.500 0 9-2 15-9 18.500C5 19 3 13 3 4c3 0 6-.5 9-2.500z" fill="#f4f4f4" stroke="#999"/><path d="M8 8l8 8M16 8l-8 8" stroke="#c82828" stroke-width="3.500"/></symbol>
<symbol id="i-plug" viewBox="0 0 24 24"><path d="M2 22l5-5M22 2l-5 5" stroke="#333" stroke-width="2"/><path d="M5 15l5-4 3 3-4 5zM11 10l5-5 3 3-4 6z" fill="#333"/></symbol>
<symbol id="i-vol" viewBox="0 0 24 24"><path d="M3 9h4l5-5v16l-5-5H3z" fill="#444"/><path d="M14 8q3 4 0 8M17 6q4 6 0 12M20 4q5 8 0 16" fill="none" stroke="#444" stroke-width="1.500"/></symbol>
<symbol id="i-batt" viewBox="0 0 24 24"><rect x="3" y="6" width="16" height="11" fill="none" stroke="#333" stroke-width="2"/><path d="M20 9h2v5h-2z" fill="#333"/><path d="M13 7l-7 6h5l-2 3 8-6h-5z" fill="#333"/></symbol>
</svg>

<div class="window">
<header class="head">
<div class="title"><button class="roll" aria-label="طي"></button><h1 dir="ltr">stopwords_article_arabic2.doc - LibreOffice Writer</h1>
<div class="winbtns" dir="ltr"><button>×</button><button>+</button><button>−</button></div></div>
<nav class="menu"><a href="#">ملف</a><a href="#">تحرير</a><a href="#">عرض</a><a href="#">إدراج</a><a href="#">تنسيق</a><a href="#">الأنماط</a><a href="#">جدول</a><a href="#">Form</a><a href="#">أدوات</a><a href="#">نافذة</a><a href="#">مساعدة</a></nav>
<div class="cite"><i class="grip"></i>
<button class="c"><svg><use href="#i-quote"/></svg>Insert Citation</button><button class="c"><svg><use href="#i-back"/></svg>Undo Edit</button><button class="c">Merge Citations</button><button class="c"><svg><use href="#i-book"/></svg>Insert Bibliography</button><button class="c"><svg><use href="#i-refresh"/></svg>Refresh</button><button class="c">Choose Citation Style</button><button class="c">Export MS Word Compatible</button></div>
</header>

<div class="bar"><i class="grip"></i>
<button class="t" aria-label="New"><svg><use href="#i-writer"/></svg></button><button class="d" aria-label="More"></button>
<button class="t" aria-label="Open"><svg><use href="#i-folder"/></svg></button><button class="d" aria-label="More"></button>
<button class="t" aria-label="Save"><svg><use href="#i-save"/></svg></button><button class="d" aria-label="More"></button><i class="s"></i>
<button class="t" aria-label="PDF"><svg><use href="#i-pdf"/></svg></button><button class="t" aria-label="Print"><svg><use href="#i-printer"/></svg></button><button class="t" aria-label="Preview"><svg><use href="#i-preview"/></svg></button><i class="s"></i>
<button class="t" aria-label="Cut"><svg><use href="#i-cut"/></svg></button><button class="t" aria-label="Copy"><svg><use href="#i-copy"/></svg></button><button class="t" aria-label="Paste"><svg><use href="#i-paste"/></svg></button><button class="d" aria-label="More"></button><i class="s"></i>
<button class="t" aria-label="Clone"><svg><use href="#i-brush"/></svg></button><i class="s"></i>
<button class="t" aria-label="Redo"><svg><use href="#i-redo"/></svg></button><button class="d" aria-label="More"></button><button class="t" aria-label="Undo"><svg><use href="#i-undo"/></svg></button><button class="d off" aria-label="More"></button><i class="s"></i>
<button class="t" aria-label="Find"><svg><use href="#i-find"/></svg></button><button class="t" aria-label="Spelling"><svg><use href="#i-spell"/></svg></button><button class="t" aria-label="Marks"><svg><use href="#i-pilcrow"/></svg></button><i class="s"></i>
<button class="t" aria-label="Table"><svg><use href="#i-table"/></svg></button><button class="d" aria-label="More"></button><button class="t" aria-label="Image"><svg><use href="#i-image"/></svg></button><button class="t" aria-label="Chart"><svg><use href="#i-chart"/></svg></button><button class="t" aria-label="Text box"><svg><use href="#i-textbox"/></svg></button><i class="s"></i>
<button class="t" aria-label="Page break"><svg><use href="#i-pagebreak"/></svg></button><button class="t" aria-label="Field"><svg><use href="#i-field"/></svg></button><button class="d" aria-label="More"></button><button class="t" aria-label="Symbol"><svg><use href="#i-omega"/></svg></button><i class="s"></i>
<button class="t" aria-label="Link"><svg><use href="#i-link"/></svg></button><button class="t" aria-label="Endnote"><svg><use href="#i-endnote"/></svg></button><button class="t" aria-label="Footnote"><svg><use href="#i-footnote"/></svg></button><button class="t" aria-label="Bookmark"><svg><use href="#i-bookmark"/></svg></button><button class="t" aria-label="Reference"><svg><use href="#i-index"/></svg></button><i class="s"></i>
<button class="t" aria-label="Comment"><svg><use href="#i-note"/></svg></button><button class="t" aria-label="Track changes"><svg><use href="#i-edit"/></svg></button><i class="s"></i>
<button class="t" aria-label="Line"><svg><use href="#i-line"/></svg></button><button class="t" aria-label="Shape"><svg><use href="#i-diamond"/></svg></button><button class="d" aria-label="More"></button><button class="t on" aria-label="Draw"><svg><use href="#i-shapes"/></svg></button>
</div>

<div class="bar"><i class="grip"></i>
<button class="t" aria-label="Styles"><svg><use href="#i-styles"/></svg></button><i class="s"></i>
<div class="combo style"><input aria-label="نمط الفقرة" value="النمط المبدئي"><button aria-label="فتح"></button></div>
<div class="combo font"><input aria-label="الخط" dir="ltr" value="Arabic Transparent"><button aria-label="فتح"></button></div>
<div class="combo size"><input aria-label="الحجم" dir="ltr" value="14"><button aria-label="فتح"></button></div><i class="s"></i>
<button class="t on" aria-label="Bold"><svg><use href="#i-bold"/></svg></button><button class="t" aria-label="Italic"><svg><use href="#i-italic"/></svg></button><button class="t" aria-label="Underline"><svg><use href="#i-under"/></svg></button><button class="d" aria-label="More"></button><button class="t" aria-label="Superscript"><svg><use href="#i-sup"/></svg></button><button class="t" aria-label="Subscript"><svg><use href="#i-sub"/></svg></button><i class="s"></i>
<button class="t" aria-label="Left"><svg><use href="#i-left"/></svg></button><button class="t" aria-label="Center"><svg><use href="#i-center"/></svg></button><button class="t" aria-label="Right"><svg><use href="#i-right"/></svg></button><button class="t on" aria-label="Justify"><svg><use href="#i-justify"/></svg></button><i class="s"></i>
<button class="t" aria-label="LTR"><svg><use href="#i-ltr"/></svg></button><button class="t on" aria-label="RTL"><svg><use href="#i-rtl"/></svg></button><i class="s"></i>
<button class="t" aria-label="Numbering"><svg><use href="#i-numbers"/></svg></button><button class="d" aria-label="More"></button><button class="t" aria-label="Bullets"><svg><use href="#i-bullets"/></svg></button><button class="d" aria-label="More"></button><button class="t" aria-label="Outdent"><svg><use href="#i-outdent"/></svg></button><button class="t" aria-label="Indent"><svg><use href="#i-indent"/></svg></button><button class="t" aria-label="Grow"><svg><use href="#i-grow"/></svg></button><button class="t" aria-label="Shrink"><svg><use href="#i-shrink"/></svg></button><i class="s"></i>
<button class="t" aria-label="Font colour"><svg><use href="#i-fontcolor"/></svg></button><button class="d" aria-label="More"></button><button class="t" aria-label="Highlight"><svg><use href="#i-highlight"/></svg></button><button class="d" aria-label="More"></button><button class="t" aria-label="Background"><svg><use href="#i-bgcolor"/></svg></button><button class="d" aria-label="More"></button><i class="s"></i>
<button class="t" aria-label="Character"><svg><use href="#i-char"/></svg></button><button class="t" aria-label="Paragraph"><svg><use href="#i-para"/></svg></button>
</div>

<main class="work" dir="ltr">
<div class="side"><button class="sidegrip" aria-label="الشريط الجانبي"></button></div>
<div class="scroll"><div class="thumb"></div></div>
<div class="view">
<div class="ruler">
<div class="bands"><span class="gray notes-label">تعليقات</span><span class="white"></span><span class="gray"></span></div>
<div class="scale"><b>17</b><b>16</b><b>15</b><b>14</b><b>13</b><b>12</b><b>11</b><b>10</b><b>9</b><b>8</b><b>7</b><b>6</b><b>5</b><b>4</b><b>3</b><b>2</b><b>1</b><b></b><b>1</b><b>2</b></div>
<div class="stops"><i></i><i></i><i></i><i></i><i></i></div>
<svg class="mark first" viewBox="0 0 12 16"><path d="M.5.5h11v2L6 8l5.500 5.500v2H.5v-2L6 8 .5 2.500z" fill="#d6d6d6" stroke="#888"/></svg>
<svg class="mark last" viewBox="0 0 12 16"><path d="M.5 15.500v-4L6 7.500l5.500 4v4z" fill="#d0d0d0" stroke="#888"/></svg>
<i class="tabmark"></i>
</div>
<div class="desk">
<article class="page" dir="rtl">
<p class="item"><span>-</span>معرف: هل الكلمة معرفة أصلا مثلا الذين.</p>
<table>
<colgroup><col class="w87 cyan"><col class="w67"><col class="w115"><col class="w47 gold"><col class="w47"><col class="w47 gold"><col class="w47"><col class="w47 gold"><col class="w47"><col class="w47 gold"><col class="w47 gold"><col class="w47 gold"></colgroup>
<thead><tr><th>نوعها</th><th>صنف</th><th>العطف</th><th class="v"><span>التعريف</span></th><th class="v"><span>الجر</span></th><th class="v"><span>الإضافة</span></th><th class="v"><span>الاستفهام</span></th><th class="v"><span>التصريف</span></th><th class="v"><span>لام القسم</span></th><th class="v"><span>معرف</span></th><th class="v"><span>ملاحظة</span></th><th></th></tr></thead>
<tbody>
<tr><th>بيد</th><td>حرف</td><td>استثناء</td><td>ع</td><td>*</td><td>*</td><td>*</td><td>*</td><td>*</td><td>*</td><td>*</td><td class="dash">-</td></tr>
<tr><th>سوى</th><td>اسم</td><td>استثناء</td><td>ع</td><td>*</td><td>*</td><td>*</td><td>*</td><td>*</td><td>*</td><td>*</td><td class="dash">-</td></tr>
<tr><th>غير</th><td>اسم</td><td>استثناء</td><td>ع</td><td>*</td><td>ج</td><td>ض</td><td>س</td><td>*</td><td>ل</td><td>*</td><td class="dash">-</td></tr>
<tr class="tall"><th>لاسيما</th><td>حرف</td><td>استثناء<br>اسم</td><td>ع</td><td>*</td><td>*</td><td>*</td><td>*</td><td>*</td><td>*</td><td>*</td><td class="dash">-</td></tr>
<tr class="end"><th>أنّى</th><td>اسم</td><td>الاستفهام</td><td>ع</td><td>*</td><td>*</td><td>*</td><td>*</td><td>*</td><td>*</td><td>*</td><td class="dash">-</td></tr>
</tbody></table>
</article>
<div class="comments"></div>
<div class="vruler"><div class="vscale"><b>1</b><b class="zero"></b><b>1</b><b>2</b><b>3</b><b>4</b><b>5</b><b>6</b><b>7</b><b>8</b></div></div>
</div>
</div>
<svg class="pointer" viewBox="0 0 12 20"><path d="M.5.5v16l4-4 3 6.500 2.500-1-3-6.500h5z" fill="#fff" stroke="#000"/></svg>
</main>

<div class="bar draw"><i class="grip"></i>
<button class="t" aria-label="Select"><svg><use href="#i-cursor"/></svg></button><i class="s"></i>
<button class="t" aria-label="Line"><svg><use href="#i-line"/></svg></button><button class="t" aria-label="Arrow"><svg><use href="#i-arrow"/></svg></button><button class="d" aria-label="More"></button><button class="t" aria-label="Freeform"><svg><use href="#i-pencil"/></svg></button><button class="d" aria-label="More"></button><button class="t" aria-label="Curve"><svg><use href="#i-curve"/></svg></button><button class="t" aria-label="Polygon"><svg><use href="#i-poly"/></svg></button><i class="s"></i>
<button class="t" aria-label="Rectangle"><svg><use href="#i-rect"/></svg></button><button class="t" aria-label="Rounded"><svg><use href="#i-round"/></svg></button><button class="t" aria-label="Square"><svg><use href="#i-square"/></svg></button><button class="t" aria-label="Ellipse"><svg><use href="#i-ellipse"/></svg></button><button class="t" aria-label="Circle"><svg><use href="#i-circle"/></svg></button><button class="t" aria-label="Triangle"><svg><use href="#i-tri"/></svg></button><button class="t" aria-label="Right triangle"><svg><use href="#i-rtri"/></svg></button><i class="s"></i>
<button class="t" aria-label="Basic"><svg><use href="#i-diamond"/></svg></button><button class="d" aria-label="More"></button><button class="t" aria-label="Symbols"><svg><use href="#i-smiley"/></svg></button><button class="d" aria-label="More"></button><button class="t" aria-label="Arrows"><svg><use href="#i-arrows"/></svg></button><button class="d" aria-label="More"></button><button class="t" aria-label="Stars"><svg><use href="#i-star"/></svg></button><button class="d" aria-label="More"></button><button class="t" aria-label="Callouts"><svg><use href="#i-callout"/></svg></button><button class="d" aria-label="More"></button><button class="t" aria-label="Flowchart"><svg><use href="#i-flow"/></svg></button><button class="d" aria-label="More"></button><i class="s"></i>
<button class="t" aria-label="Callout"><svg><use href="#i-comment"/></svg></button><i class="s"></i><button class="t" aria-label="Text"><svg><use href="#i-textbox"/></svg></button><button class="t" aria-label="Fontwork"><svg><use href="#i-fontwork"/></svg></button><i class="s"></i>
<button class="t" aria-label="Points"><svg><use href="#i-points"/></svg></button><button class="t" aria-label="Glue"><svg><use href="#i-glue"/></svg></button><i class="grip mid"></i>
<button class="t" aria-label="Row above"><svg><use href="#i-rowabove"/></svg></button><button class="t" aria-label="Row below"><svg><use href="#i-rowbelow"/></svg></button><button class="t" aria-label="Column before"><svg><use href="#i-colbefore"/></svg></button><button class="t" aria-label="Column after"><svg><use href="#i-colafter"/></svg></button><i class="s"></i>
<button class="t" aria-label="Delete row"><svg><use href="#i-delrow"/></svg></button><button class="t" aria-label="Delete column"><svg><use href="#i-delcol"/></svg></button><button class="t" aria-label="Delete table"><svg><use href="#i-deltab"/></svg></button><i class="s"></i>
<button class="t" aria-label="Select cell"><svg><use href="#i-cellsel"/></svg></button><button class="t" aria-label="Select table"><svg><use href="#i-tabsel"/></svg></button>
<button class="overflow" dir="ltr">«</button>
</div>

<footer class="status">
<span class="st-page">الصفحة 5 من 12</span><span class="st-words"><bdi dir="ltr">2’130</bdi> كلمات، و <bdi dir="ltr">12’660</bdi> أحرف</span><span class="st-style">النمط المبدئيّ</span><span class="st-lang">العربية (السعودية)</span>
<span class="st-icons"><svg viewBox="0 0 14 12"><path d="M1 3h8v6H1z" fill="#808080"/><path d="M10 1.500h3M10 10.500h3M11.500 2v8" stroke="#808080"/></svg><svg viewBox="0 0 14 12"><path d="M9.500 3V.5h-8v10h8V9" fill="none" stroke="#888"/><text x="9" y="13" class="gb" font-size="14" text-anchor="middle" fill="#b01020">*</text></svg></span>
<span class="st-table">الجدول2:A1</span>
<span class="st-views"><svg viewBox="0 0 8 10"><path d="M.5.5h4l3 3v6h-7zM4.500.5v3h3" fill="none" stroke="#444"/></svg><svg class="two" viewBox="0 0 18 10"><path d="M.5.5h4l3 3v6h-7zM4.500.5v3h3M10.500.5h4l3 3v6h-7zM14.500.5v3h3" fill="none" stroke="#808080"/></svg><svg class="two" viewBox="0 0 18 10"><path d="M8.500.5h-5l-3 3v6h8zM3.500.5v3h-3M8.500.5h4l3 3v6h-7zM12.500.5v3h3" fill="none" stroke="#808080"/></svg></span>
<span class="zoom" dir="ltr"><button>+</button><input type="range" aria-label="التكبير" min="0" max="100" value="48"><button>−</button></span>
<span class="st-pct">٪١٢٩</span>
</footer>
</div>

<footer class="panel">
<button class="menubtn"><svg><use href="#i-mint"/></svg>القائمة</button>
<button class="q" aria-label="Desktop"><svg><use href="#i-desk"/></svg></button>
<div class="launch"><button class="q lit" aria-label="Files"><svg><use href="#i-cab"/></svg></button><button class="q" aria-label="Terminal"><svg><use href="#i-term"/></svg></button><button class="q" aria-label="Firefox"><svg><use href="#i-fox2"/></svg></button></div>
<button class="q notes" aria-label="Notes"><svg><use href="#i-text"/></svg></button>
<div class="tasks"><button><svg><use href="#i-bird"/></svg><span>صندو...</span></button><button><svg><use href="#i-fox"/></svg><span dir="ltr">linuxs...</span></button><button><svg><use href="#i-term"/></svg><span dir="ltr">zerro...</span></button><button><svg><use href="#i-text"/></svg><span>*وثيقة...</span></button><button><svg><use href="#i-rema"/></svg><span dir="ltr">Rema...</span></button><button><svg><use href="#i-files"/></svg><span>مقال ...</span></button><button><svg><use href="#i-lo"/></svg><span>ملحق ...</span></button><button class="cur"><svg><use href="#i-lo"/></svg><span dir="ltr">stop...</span></button></div>
<div class="spaces"><i></i><i></i><i></i><i></i></div>
<div class="tray"><svg><use href="#i-scis"/></svg><svg class="cal"><use href="#i-cal"/></svg><svg><use href="#i-bt"/></svg><svg><use href="#i-mon"/></svg><svg><use href="#i-shield"/></svg><svg><use href="#i-plug"/></svg><span>ar</span><svg><use href="#i-vol"/></svg><svg><use href="#i-batt"/></svg></div>
<time>الخميس&nbsp; 3 مايو، 18:24</time>
</footer>
</body>
</html>
```
FILE: styles.css
```css
* { box-sizing: border-box; }
body { margin: 0; height: 100vh; display: flex; flex-direction: column; overflow: hidden; background: #d6d6d6; color: #222; font: 12px/16px "Noto Sans", "DejaVu Sans", sans-serif; }
svg { direction: ltr; width: 24px; height: 24px; flex: none; }
svg.paints { width: 0; height: 0; }
svg.sprite { display: none; }
svg text { font-family: "Noto Sans", sans-serif; }
svg .gs { font-family: "DejaVu Serif", serif; font-weight: bold; }
svg .gb { font-family: "Noto Sans", sans-serif; font-weight: bold; }
button { font: inherit; color: inherit; border: 0; padding: 0; background: none; }
a { color: inherit; text-decoration: none; }

.window { flex: 1; min-height: 0; display: flex; flex-direction: column; border: 1px solid #8c8c8c; border-width: 1px 1px 2px; padding: 0 2px; border-radius: 5px 5px 0 0; }
.head { height: 95px; background: linear-gradient(#e8e8e8, #d6d6d6 25px, #d6d6d6 55px, #c0c0c0); border-bottom: 1px solid #999; flex: none; }
.title { display: flex; align-items: center; height: 30px; padding: 0 12px; }
.title h1 { flex: 1; margin: 0; text-align: center; font-size: 16px; line-height: 20px; color: #6e6e6e; text-shadow: 0 1px #fff; }
.roll { width: 10px; height: 6px; background: #999; clip-path: polygon(0 0, 100% 0, 50% 100%); }
.winbtns { display: flex; width: 68px; justify-content: space-between; font: bold 18px/20px "Noto Sans", sans-serif; color: #999; text-shadow: 0 1px #fff; }
.menu { display: flex; gap: 16px; padding: 5px 9px 0; height: 31px; font-size: 13px; }
.cite { display: flex; align-items: center; height: 28px; padding-right: 5px; }
.c { display: flex; align-items: center; gap: 2px; padding: 0 7px; white-space: nowrap; }
.c svg { margin-right: -3px; }
.bar { display: flex; align-items: center; flex: none; height: 39px; padding: 0 5px; background: linear-gradient(#d6d6d6, #bfbfbf); border-bottom: 1px solid #999; }
.draw { height: 40px; border-bottom-width: 2px; }
.grip { width: 2px; height: 26px; flex: none; margin-left: 5px; background: repeating-linear-gradient(#909090 0 2px, transparent 2px 6px); }
.draw .grip { margin-left: 7px; }
.draw .grip.mid { margin: 0 8px; }
.t { width: 33px; height: 33px; flex: none; display: flex; align-items: center; justify-content: center; }
.on { border: 1px solid #aaa; border-radius: 3px; background: linear-gradient(#fafafa, #e2e2e2); width: 31px; margin: 0 1px; }
.d { width: 17px; height: 30px; flex: none; display: flex; align-items: center; justify-content: center; }
.d::before { content: ""; border: 3px solid transparent; border-top-color: #000; border-bottom: 0; }
.off::before { border-top-color: #999; }
.s { width: 2px; height: 22px; flex: none; margin: 0 3px; background: linear-gradient(90deg, #999 50%, #e8e8e8 50%); }
.combo { display: flex; width: 133px; height: 27px; margin-left: 10px; border: 1px solid #8c8c8c; border-radius: 4px; background: #f2f2f2; overflow: hidden; }
.combo.style { margin-right: 3px; }
.combo.size { width: 50px; margin-left: 2px; }
.combo input { flex: 1; min-width: 0; border: 0; background: none; padding: 0 3px; font: 13px "Noto Sans", "DejaVu Sans", sans-serif; color: #222; text-align: left; }
.combo.style input { direction: ltr; }
.combo.font input { font-style: italic; padding: 0 0 0 2px; }
.combo button { width: 19px; flex: none; border-right: 1px solid #999; background: linear-gradient(#f6f6f6, #dcdcdc); display: flex; align-items: center; justify-content: center; }
.combo button::before { content: ""; border: 4px solid transparent; border-top: 5px solid #222; border-bottom: 0; }
.overflow { margin-right: auto; padding-left: 1px; font: bold 16px "Noto Sans", sans-serif; color: #000; }

.work { flex: 1; min-height: 0; display: flex; position: relative; margin-top: 1px; }
.side { width: 9px; border: 1px solid #fff; border-right: 1px solid #888; display: flex; align-items: center; }
.sidegrip { width: 7px; height: 73px; background: #939393; }
.sidegrip::before { content: ""; display: block; width: 0; margin-left: 1px; border: 3px solid transparent; border-left: 4px solid #ddd; border-right: 0; }
.scroll { width: 13px; background: linear-gradient(90deg, #cfcfcf, #f0f0f0); padding: 166px 1px 0; }
.thumb { height: 28px; border: 1px solid #909090; border-radius: 5px; background: linear-gradient(90deg, #fafafa, #dedede); }
.view { flex: 1; min-width: 0; display: flex; flex-direction: column; }
.ruler { position: relative; height: 24px; padding-top: 3px; display: grid; flex: none; font: 11px/14px "Noto Sans", "DejaVu Sans", sans-serif; color: #999; }
.bands, .scale, .stops { grid-area: 1 / 1; height: 16px; display: grid; }
.bands { grid-template-columns: 151fr 776fr 123fr 288fr; }
.gray { border: 1px solid #909090; border-left: 0; }
.notes-label { padding-left: 20px; font-size: 9px; background: linear-gradient(#909090, #909090) 53px 0 / 1px 100% no-repeat; }
.white { background: #f7f7f7; }
.scale { grid-template-columns: 736fr repeat(20, 488fr) 2884fr; }
.scale b:first-child { grid-column: 2; }
.scale b { font-weight: normal; text-align: center; background: linear-gradient(#888, #888) left center / 1px 3px no-repeat, linear-gradient(#888, #888) center bottom / 1px 1px no-repeat; }
.stops { grid-template-columns: 587fr repeat(5, 62fr) 441fr; align-items: end; }
.stops i:first-child { grid-column: 2; }
.stops i { width: 5px; height: 4px; margin-left: 29px; border-bottom: 1px solid #808080; background: linear-gradient(#808080, #808080) center / 1px 100% no-repeat; }
.mark { position: absolute; width: 12px; height: 16px; top: 3px; }
.first { left: 922px; }
.last { left: 546px; }
.tabmark { position: absolute; right: 7px; top: 8px; width: 7px; height: 7px; border: solid #909090; border-width: 0 2px 2px 0; }
.desk { flex: 1; min-height: 0; display: grid; grid-template-columns: 1025fr 234fr 53fr; padding-left: 27px; overflow: hidden; }
.page { display: grid; grid-template-columns: 205fr 695fr 124fr; grid-template-rows: 64px auto 1fr; border-right: 2px solid #bbb; background: linear-gradient(#bbb, #bbb) 147px 0 / 1px 100% no-repeat, linear-gradient(#bbb, #bbb) 877px 0 / 1px 100% no-repeat, #fff; box-shadow: -3px 0 4px #aaa; color: #000; min-height: 0; }
.item { grid-column: 2; margin: -6px -30px 0 0; font: 19px/28px "Liberation Serif", "DejaVu Sans", serif; white-space: nowrap; }
.item span { display: inline-block; width: 29px; }
table { grid-column: 2; grid-row: 2; width: 100%; table-layout: fixed; border-collapse: collapse; border: 1px solid #bbb; background: #fff; font: 20px/41px "Noto Sans", "DejaVu Sans", sans-serif; }
.w87 { width: 87px; }
.w67 { width: 67px; }
.w115 { width: 115px; }
.w47 { width: 47px; }
.gold { background: #fc0; }
.cyan { background: #cff; }
td, th { padding: 0; text-align: center; vertical-align: top; height: 48px; }
th { font-size: 18px; }
tbody th { text-align: right; padding-right: 8px; }
thead th { height: 117px; vertical-align: bottom; padding-bottom: 5px; }
thead .v { text-align: left; }
.v span { display: inline-block; vertical-align: bottom; writing-mode: vertical-rl; transform: rotate(180deg); line-height: 30px; white-space: nowrap; }
.tall td { height: 82px; }
.end td, .end th { height: 46px; }
td.dash { padding-top: 20px; line-height: 26px; font-weight: bold; }
.comments { background: #e6e6e6; border-right: 1px solid #aaa; box-shadow: 3px 0 4px #bbb; }
.vruler { justify-self: end; width: 16px; margin-right: 4px; background: linear-gradient(#909090, #909090) 0 64px / 100% 1px no-repeat, linear-gradient(#909090, #909090) left top / 1px 64px no-repeat, linear-gradient(#909090, #909090) right top / 1px 64px no-repeat, linear-gradient(#d6d6d6 64px, #f7f7f7 64px); overflow: hidden; font: 11px/14px "Noto Sans", sans-serif; color: #999; }
.vscale { margin-top: -9px; }
.vscale b { display: flex; align-items: center; justify-content: center; height: 49px; font-weight: normal; writing-mode: vertical-rl; transform: rotate(180deg); background: linear-gradient(#888, #888) center bottom / 3px 1px no-repeat; }
.pointer { position: absolute; left: 929px; top: 355px; width: 12px; height: 20px; }

.status { display: flex; align-items: center; flex: none; height: 25px; }
.status span { white-space: nowrap; }
.st-page { margin-right: 79px; width: 82px; }
.st-words { margin-right: 84px; width: 154px; }
.st-style { margin-right: 84px; width: 70px; }
.st-lang { margin-right: 68px; width: 89px; }
.st-icons { display: flex; gap: 14px; margin-right: 146px; }
.st-icons svg { width: 14px; height: 12px; }
.st-table { margin-right: 89px; width: 62px; }
.st-views { display: flex; gap: 5px; margin-right: 61px; }
.st-views svg { width: 8px; height: 10px; }
.st-views .two { width: 18px; }
.zoom { display: flex; align-items: center; gap: 4px; margin-right: 20px; font: bold 16px/20px "Noto Sans", sans-serif; color: #888; }
.zoom input { appearance: none; width: 98px; height: 12px; margin: 0; background: linear-gradient(#999, #999) center / 100% 1px no-repeat, linear-gradient(#999, #999) 86px center / 1px 8px no-repeat; }
.zoom input::-webkit-slider-thumb { appearance: none; width: 8px; height: 8px; border: 1px solid #888; border-radius: 50%; background: #fff; }
.st-pct { margin-right: 14px; }

.panel { display: flex; align-items: center; flex: none; height: 24px; padding: 0 5px; font-size: 13px; background: linear-gradient(#e0e0e0, #d2d2d2); }
.panel svg { width: 22px; height: 22px; }
.menubtn { display: flex; align-items: center; gap: 7px; width: 78px; padding-right: 2px; white-space: nowrap; }
.q { width: 24px; height: 22px; display: flex; align-items: center; justify-content: center; }
.launch { display: flex; gap: 3px; margin-right: 7px; }
.lit { background: #999; border: 1px solid #777; border-radius: 3px; }
.notes { margin-right: 9px; }
.tasks { flex: 1; display: flex; gap: 3px; margin: 0 28px 0 2px; }
.tasks button { flex: 1; min-width: 0; height: 22px; display: flex; align-items: center; gap: 5px; padding: 0 3px; white-space: nowrap; border: 1px solid #999; border-radius: 3px; background: linear-gradient(#ececec, #d8d8d8); }
.tasks .cur { background: linear-gradient(#a2a2a2, #b4b4b4); border-color: #777; }
.spaces { display: grid; grid-template-columns: 19px 19px; gap: 1px; width: 39px; flex: none; }
.spaces i { height: 11px; background: #8e8e8e; }
.spaces i:first-child { background: #98c4dc; }
.tray { display: flex; align-items: center; gap: 5px; margin-right: 1px; }
.tray .cal { margin-right: 7px; }
.tray span { width: 22px; text-align: center; }
time { margin-right: 8px; white-space: nowrap; }
```
